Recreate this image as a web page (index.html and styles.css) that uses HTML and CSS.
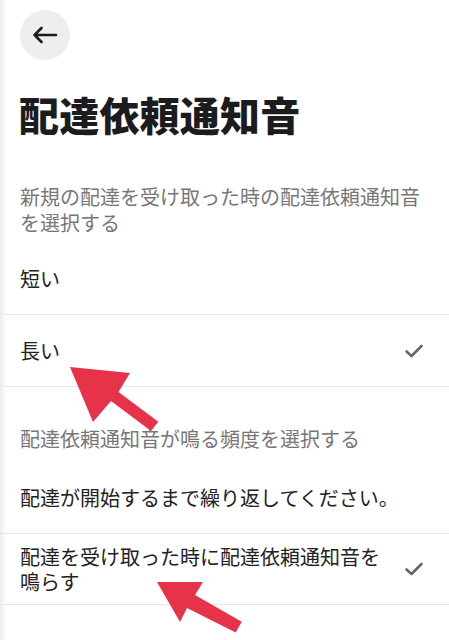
FILE: index.html
```html
<!DOCTYPE html>
<html lang="ja">
<head>
<meta charset="utf-8">
<title>配達依頼通知音</title>
<link rel="stylesheet" href="styles.css">
</head>
<body>
<div class="page">
  <header class="topbar">
    <button class="back" aria-label="戻る">
      <svg width="26" height="18" viewBox="0 0 26 18" fill="none" stroke="#1c1c1e" stroke-width="2.6" stroke-linecap="round" stroke-linejoin="round">
        <path d="M24 9H2.5M9.5 2L2.5 9L9.5 16"/>
      </svg>
    </button>
  </header>
  <h1 class="title">配達依頼通知音</h1>

  <section class="group">
    <p class="group-label">新規の配達を受け取った時の配達依頼通知音を選択する</p>
    <div class="row"><span class="row-text">短い</span></div>
    <div class="row"><span class="row-text">長い</span>
      <svg class="check" width="24" height="24" viewBox="0 0 24 24" fill="none" stroke="#666" stroke-width="2.6" stroke-linecap="round" stroke-linejoin="round"><path d="M4.5 12.5L9.5 17L19.5 7"/></svg>
    </div>
  </section>

  <section class="group group-second">
    <p class="group-label">配達依頼通知音が鳴る頻度を選択する</p>
    <div class="row"><span class="row-text">配達が開始するまで繰り返してください。</span></div>
    <div class="row row-tall"><span class="row-text">配達を受け取った時に配達依頼通知音を鳴らす</span>
      <svg class="check" width="24" height="24" viewBox="0 0 24 24" fill="none" stroke="#666" stroke-width="2.6" stroke-linecap="round" stroke-linejoin="round"><path d="M4.5 12.5L9.5 17L19.5 7"/></svg>
    </div>
  </section>

  <svg class="annotations" width="449" height="640" viewBox="0 0 449 640">
    <polygon fill="#e6334a" points="70,367 130,373 118.5,392 158.3,421.7 151,431 111,401 93,422"/>
    <polygon fill="#e6334a" points="157,582 203,582 195,595 241.7,621.7 235.7,632.5 187,608 180,622"/>
  </svg>
</div>
</body>
</html>
```

FILE: styles.css
```css
html, body {
  margin: 0;
  padding: 0;
}
body {
  background: linear-gradient(to right, #ebebeb 0px, #fafafa 5px, #ffffff 9px);
  font-family: "Noto Sans CJK JP", "Noto Sans", sans-serif;
  color: #222;
  width: 449px;
  height: 640px;
  overflow: hidden;
}
.page {
  position: relative;
  height: 640px;
}
.topbar {
  padding: 10px 0 0 20px;
  height: 50px;
}
.back {
  width: 50px;
  height: 50px;
  border-radius: 50%;
  border: none;
  background: #eeeeee;
  display: flex;
  align-items: center;
  justify-content: center;
  padding: 0;
  cursor: pointer;
}
.title {
  margin: 30px 0 0 0;
  padding-left: 19px;
  font-size: 40px;
  line-height: 48px;
  font-weight: 900;
  color: #1c1c1e;
  letter-spacing: 0.2px;
}
.group {
  margin-top: 46px;
}
.group-second {
  margin-top: 39px;
}
.group-label {
  margin: 0;
  padding: 0 20px 7px 20px;
  font-size: 20px;
  line-height: 26px;
  color: #777777;
}
.group-second .group-label {
  padding-bottom: 10px;
}
.row {
  box-sizing: border-box;
  min-height: 72px;
  padding: 10px 23px 10px 20px;
  border-bottom: 1px solid #e6e6e6;
  display: flex;
  align-items: center;
  gap: 16px;
}
.row-tall {
  min-height: 70px;
}
.row-text {
  flex: 1;
  font-size: 20px;
  line-height: 25px;
  color: #222222;
}
.check {
  flex: none;
}
.annotations {
  position: absolute;
  left: 0;
  top: 0;
  pointer-events: none;
}
```
